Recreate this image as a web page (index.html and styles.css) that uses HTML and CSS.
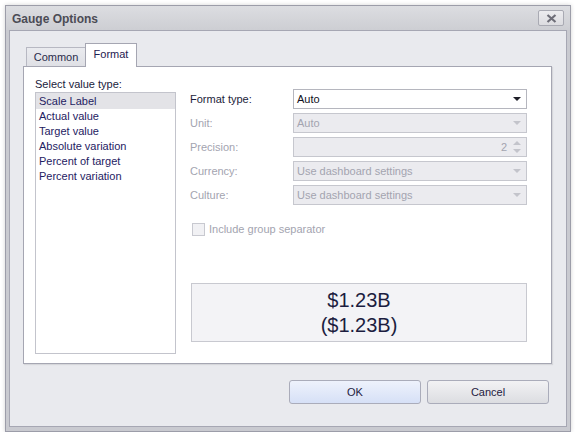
FILE: index.html
```html
<!DOCTYPE html>
<html>
<head>
<meta charset="utf-8">
<link rel="stylesheet" href="styles.css">
</head>
<body>
<div class="window">
  <div class="titlebar">
    <span class="title">Gauge Options</span>
    <span class="close"><svg width="11" height="9" viewBox="0 0 11 9"><path d="M1.5 1 L9.5 8 M9.5 1 L1.5 8" stroke="#6e6e78" stroke-width="2.2" fill="none"/></svg></span>
  </div>
  <div class="client">
    <div class="tabs">
      <div class="tab common">Common</div>
      <div class="tab active">Format</div>
    </div>
    <div class="panel">
      <div class="leftcol">
        <div class="caption">Select value type:</div>
        <div class="list">
          <div class="item selected">Scale Label</div>
          <div class="item">Actual value</div>
          <div class="item">Target value</div>
          <div class="item">Absolute variation</div>
          <div class="item">Percent of target</div>
          <div class="item">Percent variation</div>
        </div>
      </div>
      <div class="rightcol">
        <div class="row">
          <span class="lbl">Format type:</span>
          <div class="field">
            <span class="val">Auto</span>
            <span class="arrow"></span>
          </div>
        </div>
        <div class="row dis">
          <span class="lbl">Unit:</span>
          <div class="field">
            <span class="val">Auto</span>
            <span class="arrow"></span>
          </div>
        </div>
        <div class="row dis">
          <span class="lbl">Precision:</span>
          <div class="field">
            <span class="val num">2</span>
            <span class="spin"><span class="up"></span><span class="down"></span></span>
          </div>
        </div>
        <div class="row dis">
          <span class="lbl">Currency:</span>
          <div class="field">
            <span class="val">Use dashboard settings</span>
            <span class="arrow"></span>
          </div>
        </div>
        <div class="row dis">
          <span class="lbl">Culture:</span>
          <div class="field">
            <span class="val">Use dashboard settings</span>
            <span class="arrow"></span>
          </div>
        </div>
        <div class="check">
          <span class="box"></span>
          <span>Include group separator</span>
        </div>
        <div class="preview">
          <div>$1.23B</div>
          <div>($1.23B)</div>
        </div>
      </div>
    </div>
    <div class="buttons">
      <div class="btn ok">OK</div>
      <div class="btn cancel">Cancel</div>
    </div>
  </div>
</div>
</body>
</html>
```
FILE: styles.css
```css
html, body {
  margin: 0;
  padding: 0;
  background: #ffffff;
}
body {
  font-family: "Liberation Sans", Arial, sans-serif;
  font-size: 11px;
  color: #1e2050;
}
.window {
  margin: 5px 0 0 5px;
  border: 1px solid #9c9da9;
  background: #c9cad0;
  padding: 0 3px 4px 3px;
  box-sizing: content-box;
  display: flex;
  flex-direction: column;
  box-shadow: 0 0 4px rgba(0,0,0,0.18);
  width: 558px;
  height: 421px;
}
.titlebar {
  height: 24px;
  flex: none;
  display: flex;
  align-items: center;
  justify-content: space-between;
  background: linear-gradient(#dcdde1, #cdced3);
  margin: 0 -3px;
  padding: 0 6px 0 6px;
}
.title {
  font-weight: bold;
  font-size: 12px;
  color: #4b4b55;
  padding-top: 1px;
}
.close {
  width: 24px;
  height: 14px;
  border: 1px solid #a9aab3;
  border-radius: 2px;
  background: linear-gradient(#ececef, #dcdce0);
  display: flex;
  align-items: center;
  justify-content: center;
}
.client {
  flex: 1;
  border: 1px solid #a6a7b3;
  background: #e9eaee;
  padding: 12px 14px 0 13px;
  display: flex;
  flex-direction: column;
}
.tabs {
  display: flex;
  align-items: flex-end;
  padding-left: 3px;
  height: 23px;
  position: relative;
  z-index: 1;
}
.tab {
  height: 18px;
  line-height: 18px;
  box-sizing: border-box;
  text-align: center;
  border: 1px solid #b7b8c2;
  border-bottom: none;
  background: linear-gradient(#eaebef, #dfe0e5);
  color: #2a2c4a;
}
.tab.common {
  width: 59px;
  height: 19px;
  border-right: none;
}
.tab.active {
  width: 52px;
  height: 24px;
  line-height: 20px;
  background: #ffffff;
  border-color: #a5a6b2;
  margin-bottom: -1px;
  color: #1e2050;
}
.panel {
  height: 298px;
  border: 1px solid #a5a6b2;
  background: #ffffff;
  box-shadow: 1px 1px 1px rgba(0,0,0,0.08);
  display: flex;
  padding: 10px 0 0 11px;
  box-sizing: border-box;
}
.leftcol {
  width: 141px;
  display: flex;
  flex-direction: column;
}
.caption {
  height: 14px;
  line-height: 14px;
  margin-bottom: 1px;
  color: #20223c;
}
.list {
  height: 262px;
  border: 1px solid #c3c4cc;
  box-sizing: border-box;
}
.item {
  height: 15px;
  line-height: 15px;
  padding-left: 3px;
  color: #1e2162;
}
.item.selected {
  background: #e3e3e7;
  height: 16px;
  line-height: 16px;
}
.rightcol {
  margin-left: 14px;
  margin-top: 12px;
  width: 337px;
  display: flex;
  flex-direction: column;
}
.row {
  display: flex;
  align-items: center;
  height: 20px;
  margin-bottom: 4px;
}
.lbl {
  width: 103px;
  color: #1c1d3a;
}
.field {
  width: 234px;
  height: 20px;
  box-sizing: border-box;
  border: 1px solid #b5b6be;
  background: #ffffff;
  display: flex;
  align-items: center;
  padding: 0 0 0 3px;
  color: #111122;
}
.val {
  flex: 1;
}
.val.num {
  text-align: right;
  padding-right: 6px;
}
.arrow {
  width: 0;
  height: 0;
  border-left: 4px solid transparent;
  border-right: 4px solid transparent;
  border-top: 4px solid #1e1e28;
  margin-right: 5px;
}
.dis .lbl {
  color: #a3a4b0;
}
.dis .field {
  background: #ebebef;
  border-color: #c6c7ce;
  color: #a3a4b0;
}
.dis .arrow {
  border-top-color: #c3c4cb;
}
.spin {
  display: flex;
  flex-direction: column;
  gap: 4px;
  margin-right: 5px;
}
.spin .up {
  width: 0;
  height: 0;
  border-left: 4px solid transparent;
  border-right: 4px solid transparent;
  border-bottom: 4px solid #c3c4cb;
}
.spin .down {
  width: 0;
  height: 0;
  border-left: 4px solid transparent;
  border-right: 4px solid transparent;
  border-top: 4px solid #c3c4cb;
}
.check {
  display: flex;
  align-items: center;
  margin-top: 13px;
  margin-left: 2px;
  color: #a3a4b0;
  height: 14px;
}
.box {
  width: 11px;
  height: 11px;
  border: 1px solid #c8c9d0;
  background: #f1f1f4;
  margin-right: 4px;
}
.preview {
  margin-top: 47px;
  margin-left: 1px;
  width: 336px;
  height: 59px;
  box-sizing: border-box;
  border: 1px solid #c8c9d0;
  background: #f3f3f6;
  display: flex;
  flex-direction: column;
  align-items: center;
  justify-content: center;
  font-size: 20px;
  line-height: 25px;
  color: #1c1d40;
}
.buttons {
  display: flex;
  justify-content: flex-end;
  gap: 6px;
  margin-top: 16px;
  padding-right: 3px;
}
.btn {
  height: 22px;
  line-height: 22px;
  text-align: center;
  border: 1px solid #aaacba;
  border-radius: 3px;
  color: #1e2040;
}
.ok {
  width: 130px;
  background: linear-gradient(#eef2fc, #d6e0f6);
}
.cancel {
  width: 120px;
  background: linear-gradient(#f2f2f4, #dcdde1);
}
```
